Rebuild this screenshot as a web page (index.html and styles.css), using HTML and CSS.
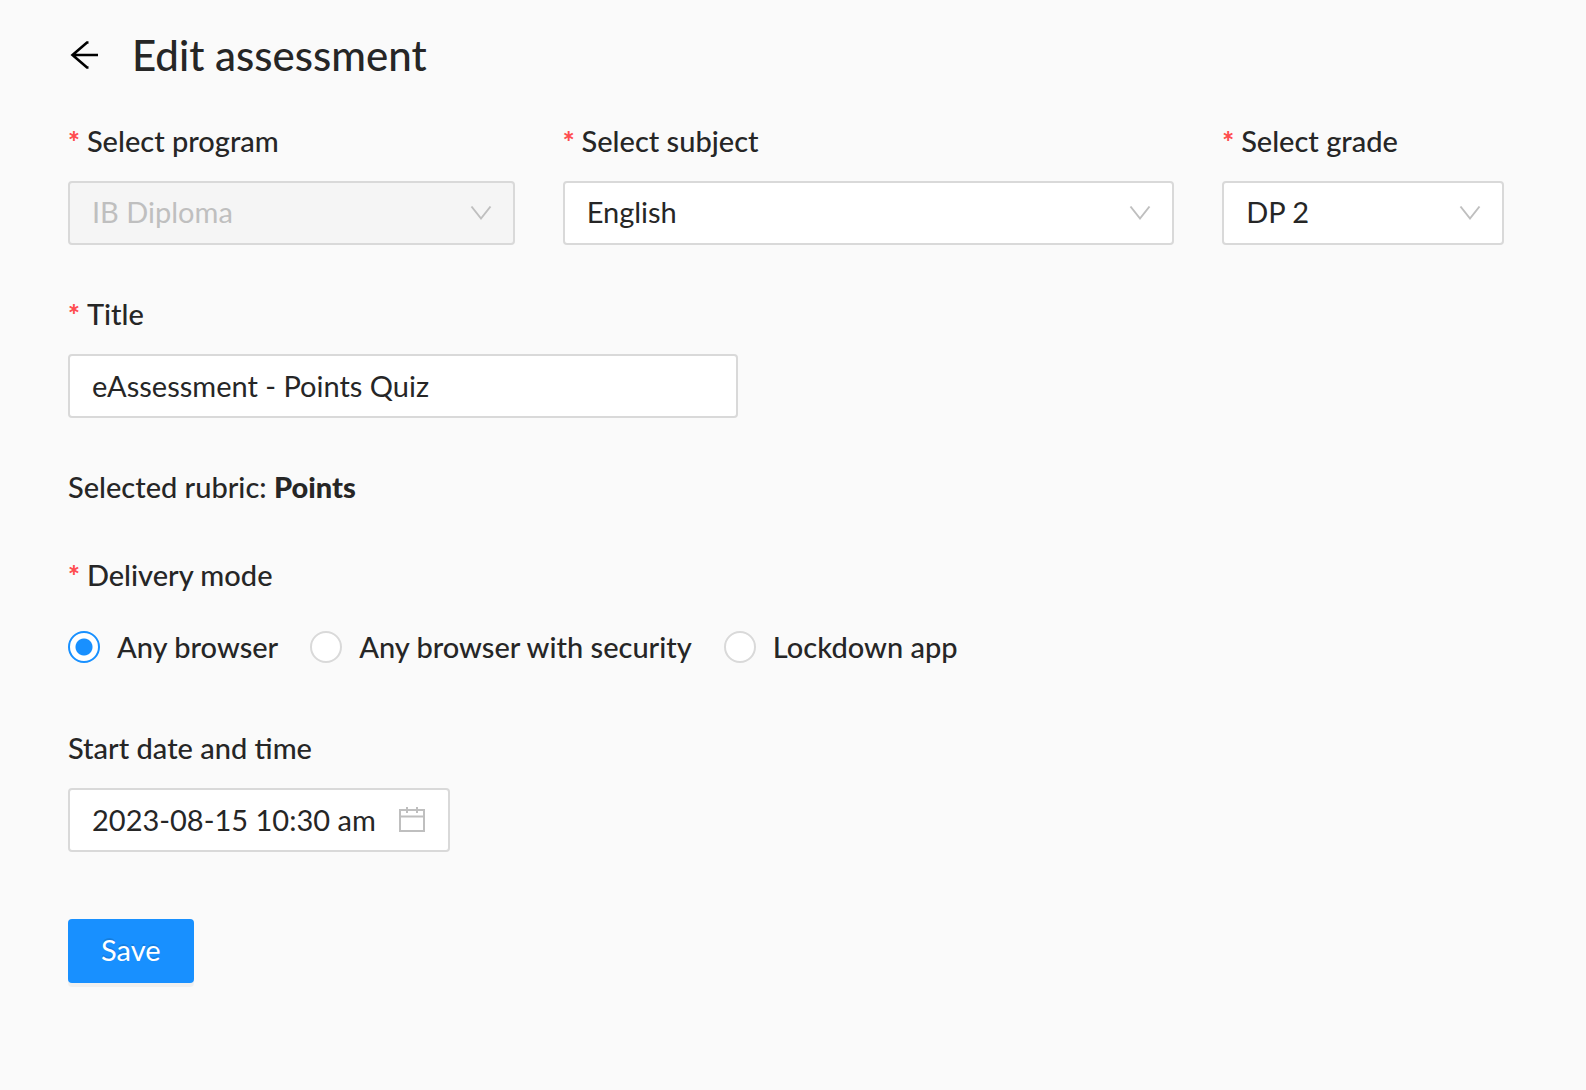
FILE: index.html
```html
<!DOCTYPE html>
<html lang="en">
<head>
    <meta charset="UTF-8">
    <meta name="viewport" content="width=device-width, initial-scale=1.0">
    <title>Edit assessment</title>
    <link rel="stylesheet" href="styles.css">
</head>
<body>
    <main class="page">
        <header class="page-header">
            <button type="button" class="back-button" aria-label="Back">
                <svg viewBox="0 0 32 32" width="32" height="32" fill="none" stroke="currentColor" stroke-width="2.6">
                    <path d="M30 16H4.500M20.500 3.500H19L4.500 16L19 28.500H20.500" />
                </svg>
            </button>
            <h1 class="page-title">Edit assessment</h1>
        </header>

        <form class="form">
            <div class="form-row">
                <div class="form-item program">
                    <label class="label required" for="program">Select program</label>
                    <div class="select-wrapper">
                        <select class="control" id="program" disabled>
                            <option>IB Diploma</option>
                        </select>
                        <svg class="arrow" viewBox="0 0 24 24" width="24" height="24" fill="none" stroke="currentColor" stroke-width="2">
                            <path d="M2.500 5.500L12 17.500L21.500 5.500" />
                        </svg>
                    </div>
                </div>
                <div class="form-item subject">
                    <label class="label required" for="subject">Select subject</label>
                    <div class="select-wrapper">
                        <select class="control" id="subject">
                            <option>English</option>
                        </select>
                        <svg class="arrow" viewBox="0 0 24 24" width="24" height="24" fill="none" stroke="currentColor" stroke-width="2">
                            <path d="M2.500 5.500L12 17.500L21.500 5.500" />
                        </svg>
                    </div>
                </div>
                <div class="form-item grade">
                    <label class="label required" for="grade">Select grade</label>
                    <div class="select-wrapper">
                        <select class="control" id="grade">
                            <option>DP 2</option>
                        </select>
                        <svg class="arrow" viewBox="0 0 24 24" width="24" height="24" fill="none" stroke="currentColor" stroke-width="2">
                            <path d="M2.500 5.500L12 17.500L21.500 5.500" />
                        </svg>
                    </div>
                </div>
            </div>

            <div class="form-item">
                <label class="label required" for="title">Title</label>
                <input type="text" class="control title-input" id="title" value="eAssessment - Points Quiz">
            </div>

            <p class="rubric">Selected rubric: <strong>Points</strong></p>

            <fieldset class="form-item">
                <legend class="label required">Delivery mode</legend>
                <div class="radio-group">
                    <label class="radio"><input type="radio" name="mode" checked><span>Any browser</span></label>
                    <label class="radio"><input type="radio" name="mode"><span>Any browser with security</span></label>
                    <label class="radio"><input type="radio" name="mode"><span>Lockdown app</span></label>
                </div>
            </fieldset>

            <div class="form-item">
                <label class="label" for="start">Start date and time</label>
                <div class="date-wrapper">
                    <input type="text" class="control" id="start" value="2023-08-15 10:30 am">
                    <svg class="calendar" viewBox="0 0 28 28" width="28" height="28" fill="none" stroke="currentColor" stroke-width="2">
                        <path d="M2 4H26V25H2ZM2 10.500H26M9 1V7M19 1V7" />
                    </svg>
                </div>
            </div>

            <button type="submit" class="save-button">Save</button>
        </form>
    </main>
</body>
</html>
```

FILE: styles.css
```css
* {
    box-sizing: border-box;
}

body {
    margin: 0;
    background: #fafafa;
    color: #262626;
    font-family: Lato, sans-serif;
    font-size: 29px;
    line-height: 44px;
}

.page {
    padding: 27px 82px 68px 68px;
}

.page-header {
    display: flex;
    align-items: center;
    gap: 32px;
    margin-bottom: 36px;
}

.back-button {
    display: flex;
    padding: 0;
    border: none;
    background: none;
    color: #000;
    cursor: pointer;
}

.page-title {
    margin: 0;
    font-size: 42px;
    font-weight: 500;
    line-height: 56px;
}

.form-row {
    display: grid;
    grid-template-columns: repeat(9, 1fr);
    column-gap: 48px;
}

.program {
    grid-column: span 3;
}

.subject {
    grid-column: span 4;
}

.grade {
    grid-column: span 2;
}

.form-item {
    min-width: 0;
    margin: 0 0 47px;
    padding: 0;
    border: none;
}

.label {
    display: block;
    margin-bottom: 18px;
    padding: 0;
    font-weight: 500;
}

.required::before {
    content: "*";
    display: inline-block;
    margin-right: 7px;
    color: #ff4d4f;
    font-size: 28px;
    font-weight: 900;
    line-height: 1;
}

.control {
    display: block;
    width: 100%;
    height: 64px;
    margin: 0;
    padding: 0 22px 2px;
    border: 2px solid #d9d9d9;
    border-radius: 4px;
    background: #fff;
    color: #262626;
    font: inherit;
    appearance: none;
}

.control:focus {
    border-color: #40a9ff;
    outline: none;
}

.control:disabled {
    background: #f5f5f5;
    color: #bfbfbf;
    opacity: 1;
}

.select-wrapper,
.date-wrapper {
    position: relative;
}

.arrow,
.calendar {
    position: absolute;
    top: 50%;
    right: 22px;
    transform: translateY(-50%);
    color: #bfbfbf;
    pointer-events: none;
}

.calendar {
    right: 24px;
}

.title-input {
    max-width: 670px;
}

.date-wrapper {
    max-width: 382px;
}

.rubric {
    margin: 0 0 44px;
    font-weight: 500;
}

.rubric strong {
    font-weight: 900;
}

.radio-group {
    display: flex;
    flex-wrap: wrap;
    gap: 0 32px;
    min-height: 64px;
    align-items: center;
}

.radio {
    display: flex;
    align-items: center;
    gap: 17px;
    font-weight: 500;
    cursor: pointer;
}

.radio input {
    width: 32px;
    height: 32px;
    margin: 0;
    border: 2px solid #d9d9d9;
    border-radius: 50%;
    background: #fff;
    appearance: none;
}

.radio input:checked {
    border-color: #1890ff;
    background: radial-gradient(circle, #1890ff 8px, #fff 9px);
}

.save-button {
    height: 64px;
    margin-top: 20px;
    padding: 0 33px 2px;
    border: none;
    border-radius: 4px;
    background: #1890ff;
    box-shadow: 0 4px 0 rgba(0, 0, 0, 0.04);
    color: #fff;
    font: inherit;
    text-shadow: 0 -2px 0 rgba(0, 0, 0, 0.12);
    cursor: pointer;
}

.save-button:hover {
    background: #40a9ff;
}

@media (max-width: 800px) {
    .page {
        padding: 27px 24px;
    }

    .program,
    .subject,
    .grade {
        grid-column: span 9;
    }
}
```
